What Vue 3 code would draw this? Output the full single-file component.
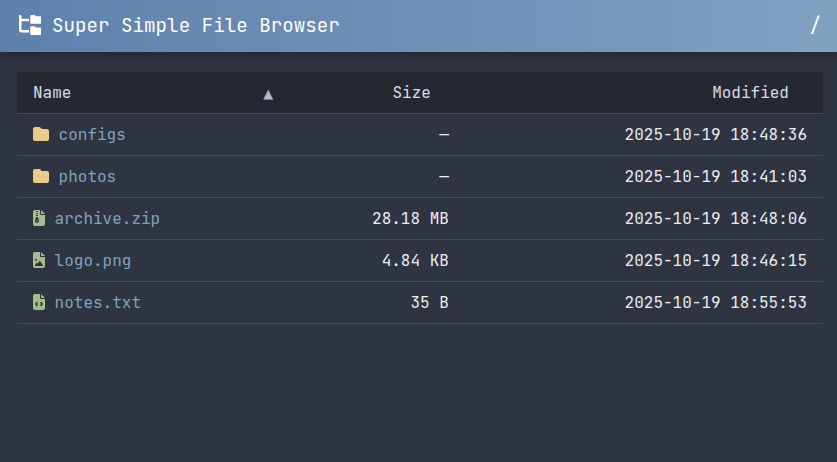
<script setup>
const sheet = 'M64 0C28.7 0 0 28.7 0 64V448c0 35.3 28.7 64 64 64H320c35.3 0 64-28.7 64-64V160H256c-17.7 0-32-14.3-32-32V0H64zM256 0V128H384L256 0z'
const icons = {
  folder: { w: 512, d: 'M64 480H448c35.3 0 64-28.7 64-64V160c0-35.3-28.7-64-64-64H288c-10.1 0-19.6-4.7-25.6-12.8L243.2 57.6C231.1 41.5 212.1 32 192 32H64C28.7 32 0 60.7 0 96V416c0 35.3 28.7 64 64 64z' },
  zip: { w: 384, d: sheet + 'M96 48c0-8.8 7.2-16 16-16h32c8.8 0 16 7.2 16 16s-7.2 16-16 16H112c-8.8 0-16-7.2-16-16zm0 64c0-8.8 7.2-16 16-16h32c8.8 0 16 7.2 16 16s-7.2 16-16 16H112c-8.8 0-16-7.2-16-16zm0 64c0-8.8 7.2-16 16-16h32c8.8 0 16 7.2 16 16s-7.2 16-16 16H112c-8.8 0-16-7.2-16-16zm-6.3 71.8c3.7-14 16.4-23.8 30.9-23.8h14.8c14.5 0 27.2 9.7 30.9 23.8l23.5 88.2c1.4 5.4 2.1 10.9 2.1 16.4c0 35.2-28.8 63.7-64 63.7s-64-28.5-64-63.7c0-5.5 .7-11.1 2.1-16.4l23.5-88.2zM112 336c-8.8 0-16 7.2-16 16s7.2 16 16 16h32c8.8 0 16-7.2 16-16s-7.2-16-16-16H112z' },
  image: { w: 384, d: sheet + 'M64 256a32 32 0 1 1 64 0 32 32 0 1 1-64 0zm152 32c5.3 0 10.2 2.6 13.2 6.9l88 128c3.4 4.9 3.7 11.3 1 16.5s-8.2 8.6-14.2 8.6H80c-5.8 0-11.1-3.1-13.9-8.1s-2.8-11.2 .2-16.1l48-80c2.9-4.8 8.1-7.8 13.7-7.8s10.8 2.9 13.7 7.8l12.8 21.4 48.3-70.2c3-4.3 7.9-6.9 13.2-6.9z' },
  code: { w: 384, d: sheet + 'M153 289l-31 31 31 31c9.4 9.4 9.4 24.6 0 33.9s-24.6 9.4-33.9 0L71 337c-9.4-9.4-9.4-24.6 0-33.9l48-48c9.4-9.4 24.6-9.4 33.9 0s9.4 24.6 0 33.9zM265 255l48 48c9.4 9.4 9.4 24.6 0 33.9l-48 48c-9.4 9.4-24.6 9.4-33.9 0s-9.4-24.6 0-33.9l31-31-31-31c-9.4-9.4-9.4-24.6 0-33.9s24.6-9.4 33.9 0z' },
}
const files = [
  { name: 'configs', icon: 'folder', size: '—', modified: '2025-10-19 18:48:36' },
  { name: 'photos', icon: 'folder', size: '—', modified: '2025-10-19 18:41:03' },
  { name: 'archive.zip', icon: 'zip', size: '28.18 MB', modified: '2025-10-19 18:48:06' },
  { name: 'logo.png', icon: 'image', size: '4.84 KB', modified: '2025-10-19 18:46:15' },
  { name: 'notes.txt', icon: 'code', size: '35 B', modified: '2025-10-19 18:55:53' },
]
</script>

<template>
  <div class="page">
    <header class="bar">
      <svg class="logo" viewBox="0 0 576 512" aria-hidden="true">
        <path fill="currentColor" d="M64 32C64 14.3 49.7 0 32 0S0 14.3 0 32v96V384c0 35.3 28.7 64 64 64H256V384H64V160H256V96H64V32zM288 192c0 17.7 14.3 32 32 32H544c17.7 0 32-14.3 32-32V64c0-17.7-14.3-32-32-32H445.3c-8.5 0-16.6-3.4-22.6-9.4L409.4 9.4c-6-6-14.1-9.4-22.6-9.4H320c-17.7 0-32 14.3-32 32V192zm0 288c0 17.7 14.3 32 32 32H544c17.7 0 32-14.3 32-32V352c0-17.7-14.3-32-32-32H445.3c-8.5 0-16.6-3.4-22.6-9.4l-13.3-13.3c-6-6-14.1-9.4-22.6-9.4H320c-17.7 0-32 14.3-32 32V480z" />
      </svg>
      <h1 class="title">Super Simple File Browser</h1>
      <span class="path">/</span>
    </header>
    <main class="listing">
      <div class="row head">
        <div class="cell name">Name<span class="arrow">▲</span></div>
        <div class="cell sortable">Size</div>
        <div class="cell sortable">Modified</div>
      </div>
      <div v-for="file in files" :key="file.name" class="row">
        <div class="cell name">
          <svg class="icon" :class="{ folder: file.icon === 'folder' }" :viewBox="`0 0 ${icons[file.icon].w} 512`" aria-hidden="true">
            <path fill="currentColor" fill-rule="evenodd" :d="icons[file.icon].d" />
          </svg>
          <a class="link">{{ file.name }}</a>
        </div>
        <div class="cell">{{ file.size }}</div>
        <div class="cell">{{ file.modified }}</div>
      </div>
    </main>
  </div>
</template>

<style>
body {
  background: #2e3440;
}
</style>

<style scoped>
.page {
  min-height: 100vh;
  color: #eceff4;
  font-family: "JetBrains Mono", "DejaVu Sans Mono", monospace;
  font-size: 16px;
}
.bar {
  display: flex;
  align-items: center;
  box-sizing: border-box;
  height: 52px;
  padding: 0 16px 2px 18.75px;
  color: #fff;
  background: linear-gradient(90deg, #5e81ac, #81a1c1);
  box-shadow: 0 2px 8px rgba(0, 0, 0, 0.3);
}
.logo {
  width: 22.5px;
  height: 20px;
}
.title {
  margin: 0 0 0 10.75px;
  font-size: 19.2px;
  font-weight: 400;
  line-height: 26px;
}
.path {
  margin-left: auto;
  font-size: 19.2px;
  line-height: 26px;
}
.listing {
  margin: 20px 14px 0 17px;
}
.row {
  display: grid;
  grid-template-columns: 272px 175.85px 358.15px;
  box-sizing: border-box;
  height: 42px;
  border-bottom: 1px solid #434c5e;
}
.head {
  background: #242831;
  color: #d8dee9;
}
.cell {
  display: flex;
  align-items: center;
  justify-content: flex-end;
  padding: 0 16px;
}
.name {
  justify-content: flex-start;
}
.sortable {
  padding-right: 34px;
}
.arrow {
  margin: 2px 0 0 auto;
  color: #b4bac5;
  font-family: "DejaVu Sans", sans-serif;
  font-size: 12.8px;
}
.icon {
  height: 16px;
  margin: 0 9.6px 1px 0;
  color: #a3be8c;
}
.folder {
  color: #ebcb8b;
}
.link {
  color: #81a1c1;
}
</style>
